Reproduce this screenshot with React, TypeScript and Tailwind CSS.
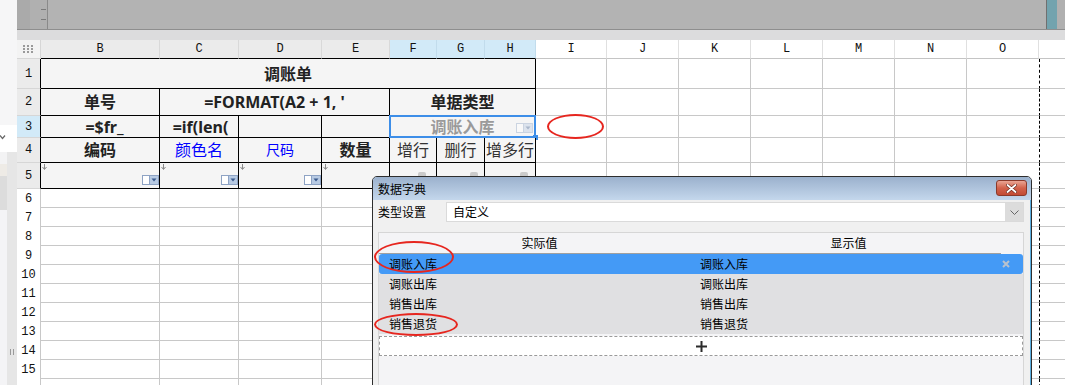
import type { ReactNode } from 'react'

const LETTERS = ['B', 'C', 'D', 'E', 'F', 'G', 'H', 'I', 'J', 'K', 'L', 'M', 'N', 'O']
const TAIL = ['I', 'J', 'K', 'L', 'M', 'N', 'O', 'END']
const BODY_ROWS = [6, 7, 8, 9, 10, 11, 12, 13, 14, 15, 16]

function Dots() {
  return (
    <svg width="11" height="8" viewBox="0 0 11 8">
      {[0, 4, 8].map(x => [0, 3, 6].map(y => <rect key={`${x}-${y}`} x={x} y={y} width="2" height="2" fill="#9a9a9a" />))}
    </svg>
  )
}

function Arrow() {
  return (
    <svg width="5" height="6" viewBox="0 0 5 6">
      <path d="M2.5 0v5M0.5 3l2 2.5 2-2.5" stroke="#8a8a8a" fill="none" strokeWidth="1" />
    </svg>
  )
}

function DropIcon({ faded }: { faded?: boolean }) {
  return (
    <svg width="17" height="10" viewBox="0 0 17 10" className={faded ? 'opacity-40' : ''}>
      <rect x="0.5" y="0.5" width="7" height="9" fill="#fff" stroke="#8ea3c4" />
      <rect x="7.5" y="0.5" width="9" height="9" fill="#b7cae3" stroke="#8ea3c4" />
      <path d="M9.5 3.5h5l-2.5 3z" fill="#3b5b8e" />
    </svg>
  )
}

// report cell; text colour is passed in className so nothing fights over it
function Rep({ span, children, className = '' }: { span?: number; children?: ReactNode; className?: string }) {
  const sp = span === 7 ? 'col-span-7' : span === 3 ? 'col-span-3' : ''
  return (
    <div className={`relative flex items-center justify-center overflow-hidden whitespace-nowrap border-r border-b border-black bg-[#f5f5f5] leading-none ${sp} ${className}`}>
      {children}
    </div>
  )
}

function FieldCell({ drop, knob }: { drop?: boolean; knob?: string }) {
  if (knob) {
    return (
      <div className={`flex items-center justify-end border-r border-b border-black bg-[#f5f5f5] ${knob}`}>
        <span className="h-[8px] w-[8px] rounded-[2px] bg-[#cacaca]" />
      </div>
    )
  }
  return (
    <div className="flex flex-col justify-between border-r border-b border-black bg-[#f5f5f5] pb-[3px] pl-px pt-px">
      <Arrow />
      {drop ? (
        <div className="flex justify-end">
          <DropIcon />
        </div>
      ) : (
        <span />
      )}
    </div>
  )
}

function Tail() {
  return (
    <>
      {TAIL.map(c =>
        c === 'END' ? (
          <div key={c} className="border-b border-l border-[#c8c8c8] border-l-black bg-white [border-left-style:dashed]" />
        ) : c === 'O' ? (
          <div key={c} className="border-b border-[#c8c8c8] bg-white" />
        ) : (
          <div key={c} className="border-r border-b border-[#c8c8c8] bg-white" />
        )
      )}
    </>
  )
}

function RowHead({ n }: { n: number }) {
  return (
    <div className={`flex items-center justify-center border-r border-b border-b-[#d6d6d6] border-r-black font-['Liberation_Mono',monospace] text-[12px] text-[#111] ${n === 3 ? 'bg-[#d2eaf8]' : 'bg-[#ebebeb]'}`}>
      {n}
    </div>
  )
}

function Sheet() {
  return (
    <div className="grid grid-cols-[24px_119px_79px_83px_68px_47px_48px_51px_71px_72px_72px_72px_72px_72px_72px_26px] grid-rows-[19px_30px_27px_22px_25px_26px_repeat(11,19px)] font-['Noto_Sans','Noto_Sans_CJK_SC',sans-serif]">
      {/* column header */}
      <div className="flex items-center justify-center border-r border-b border-[#d6d6d6] bg-[#f3f3f3]">
        <Dots />
      </div>
      {LETTERS.map((l, i) => (
        <div
          key={l}
          className={`flex items-center justify-center border-r border-b font-['Liberation_Mono',monospace] text-[12px] text-[#111] ${
            i < 4
              ? 'border-[#d9d9d9] border-b-black bg-[#ebebeb]'
              : i < 7
                ? 'border-[#c2dcec] border-b-black bg-[#d2eaf8]'
                : 'border-[#e0e0e0] border-b-[#c4c4c4] bg-white'
          }`}
        >
          {l}
        </div>
      ))}
      <div className="border-b border-[#c4c4c4] bg-white" />

      {/* row 1 */}
      <RowHead n={1} />
      <Rep span={7} className="text-[16px] font-bold text-[#222]">调账单</Rep>
      <Tail />

      {/* row 2 */}
      <RowHead n={2} />
      <Rep className="text-[16px] font-bold text-[#222]">单号</Rep>
      <Rep span={3} className="text-[16px] font-bold text-[#222]">=FORMAT(A2 + 1, '</Rep>
      <Rep span={3} className="text-[16px] font-bold text-[#222]">单据类型</Rep>
      <Tail />

      {/* row 3 */}
      <RowHead n={3} />
      <Rep className="pl-[9px] text-[16px] font-bold text-[#222]">=$fr_</Rep>
      <Rep className="pl-[3px] text-[16px] font-bold text-[#222]">=if(len(</Rep>
      <Rep />
      <Rep />
      <Rep span={3} className="overflow-visible! bg-[#e9f1fb] text-[16px] font-bold text-[#9a9a9a]">
        <span>调账入库</span>
        <span className="absolute right-[2px] top-[7px]">
          <DropIcon faded />
        </span>
        <span className="absolute -inset-px border-2 border-[#3d8ee8]" />
        <span className="absolute -bottom-[3px] -right-[3px] h-[5px] w-[5px] bg-[#3d8ee8]" />
      </Rep>
      <Tail />

      {/* row 4 */}
      <RowHead n={4} />
      <Rep className="text-[16px] font-bold text-[#222]">编码</Rep>
      <Rep className="text-[16px] text-[#0000ff]">颜色名</Rep>
      <Rep className="text-[14px] text-[#0000ff]">尺码</Rep>
      <Rep className="text-[16px] font-bold text-[#222]">数量</Rep>
      <Rep className="text-[16px] text-[#333]">增行</Rep>
      <Rep className="text-[16px] text-[#333]">删行</Rep>
      <Rep className="text-[16px] text-[#333]">增多行</Rep>
      <Tail />

      {/* row 5 */}
      <RowHead n={5} />
      <FieldCell drop />
      <FieldCell drop />
      <FieldCell drop />
      <FieldCell />
      <FieldCell knob="pr-[10px]" />
      <FieldCell knob="pr-[6px]" />
      <FieldCell knob="pr-[7px]" />
      <Tail />

      {BODY_ROWS.map(n => (
        <div key={n} className="contents">
          <div className="flex items-center justify-center border-r border-[#c8c8c8] bg-white font-['Liberation_Mono',monospace] text-[12px] text-[#111]">
            {n < 16 ? n : ''}
          </div>
          {LETTERS.slice(0, 7).map(l => (
            <div key={l} className="border-r border-b border-[#c8c8c8] bg-white" />
          ))}
          <Tail />
        </div>
      ))}
    </div>
  )
}

function TopBar() {
  return (
    <div className="flex h-[30px] shrink-0 border-b border-[#8e8e8e]">
      <div className="w-[13px] bg-[#aaaaaa]" />
      <div className="flex w-[18px] flex-col items-end gap-[9px] border-r border-[#8a8a8a] bg-[#b0b0b0] pr-px pt-[9px]">
        <span className="h-px w-[5px] bg-[#7a7a7a]" />
        <span className="h-px w-[5px] bg-[#7a7a7a]" />
      </div>
      <div className="flex-1 bg-[#b3b3b3]" />
      <div className="w-[11px] border-l border-[#707070] bg-[#72a3ae]" />
      <div className="w-[8px] bg-[#b0b0b0]" />
    </div>
  )
}

function LeftPanel() {
  return (
    <div className="flex w-[17px] shrink-0 flex-col bg-[#f6f6f7]">
      <div className="h-[125px] shrink-0" />
      <div className="flex h-[27px] shrink-0 items-center bg-white pb-[2px]">
        <svg width="6" height="5" viewBox="0 0 6 5">
          <path d="M0 0.5l2.5 3 2.5-3" stroke="#666" fill="none" strokeWidth="1.2" />
        </svg>
      </div>
      <div className="flex flex-1">
        <div className="flex w-[7px] flex-col">
          <div className="h-[12px] bg-[#f3f3f4]" />
          <div className="h-[12px] bg-[#eeebe6]" />
          <div className="h-[34px] bg-[#dcdcdc]" />
          <div className="flex-1 bg-[#f4f4f6]" />
        </div>
        <div className="flex w-[10px] flex-col items-center bg-[#e6e6e6] pt-[197px]">
          <div className="flex gap-[2px]">
            <span className="h-[6px] w-px bg-[#9a9a9a]" />
            <span className="h-[6px] w-px bg-[#9a9a9a]" />
          </div>
        </div>
      </div>
    </div>
  )
}

function Dialog() {
  const rows = ['调账入库', '调账出库', '销售出库', '销售退货']
  return (
    <div className="absolute left-[372px] top-[176px] flex h-[230px] w-[660px] flex-col overflow-hidden rounded-t-[5px] border border-[#2e2e2e] bg-[#f0f0f0] font-['Noto_Sans_CJK_SC',sans-serif] text-[12px] leading-none text-black">
      <div className="flex h-[23px] shrink-0 items-start justify-between bg-gradient-to-b from-[#9bb1cd] to-[#c4d7ec] pl-[5px] pr-[4px]">
        <span className="pt-[6px] text-[12px]">数据字典</span>
        <div className="mt-[3px] flex h-[16px] w-[31px] items-center justify-center rounded-[3px] border border-[#8b3a2a] bg-gradient-to-b from-[#e9a594] via-[#d2624b] to-[#c24b34]">
          <svg width="11" height="9" viewBox="0 0 11 9">
            <path d="M1.5 1l8 7M9.5 1l-8 7" stroke="#6b2a1e" strokeWidth="3.2" strokeLinecap="round" />
            <path d="M1.5 1l8 7M9.5 1l-8 7" stroke="#fff" strokeWidth="1.8" strokeLinecap="round" />
          </svg>
        </div>
      </div>
      <div className="flex flex-1 flex-col border-r border-[#5aaee0] pl-[5px] pr-[6px]">
        <div className="mt-[2px] flex h-[20px] items-center">
          <span className="w-[68px]">类型设置</span>
          <div className="flex h-full flex-1 items-stretch border border-[#dadada] bg-white">
            <span className="flex flex-1 items-center pl-[6px]">自定义</span>
            <span className="flex w-[18px] items-center justify-center bg-[#dcdcdc]">
              <svg width="9" height="5" viewBox="0 0 9 5">
                <path d="M0.5 0.5l4 4 4-4" stroke="#666" fill="none" />
              </svg>
            </span>
          </div>
        </div>
        <div className="mt-[10px] flex flex-1 flex-col border border-[#d6d6d6] bg-[#f4f4f6]">
          <div className="grid h-[20px] grid-cols-[321px_297px] items-center">
            <span className="text-center">实际值</span>
            <span className="text-center">显示值</span>
          </div>
          <div className="mr-[22px] h-px bg-[#a0a0a0]" />
          {rows.map((r, i) => (
            <div
              key={r}
              className={`grid h-[20px] grid-cols-[320px_1fr_20px] items-center px-px ${i === 0 ? 'rounded-[3px] bg-[#449af6]' : 'bg-[#e0e0e2]'}`}
            >
              <span className="pl-[9px]">{r}</span>
              <span>{r}</span>
              {i === 0 ? (
                <svg width="8" height="8" viewBox="0 0 8 8">
                  <path d="M1 1l6 6M7 1l-6 6" stroke="#b9c2ce" strokeWidth="2" />
                </svg>
              ) : (
                <span />
              )}
            </div>
          ))}
          <div className="mt-[2px] flex h-[20px] items-center justify-center border border-dashed border-[#9a9a9a] bg-white">
            <svg width="11" height="11" viewBox="0 0 11 11">
              <path d="M5.5 0v11M0 5.5h11" stroke="#2b2b2b" strokeWidth="2" />
            </svg>
          </div>
        </div>
      </div>
    </div>
  )
}

export default function App() {
  return (
    <div className="relative flex h-[385px] w-[1065px] overflow-hidden bg-white">
      <LeftPanel />
      <div className="flex min-w-0 flex-1 flex-col">
        <TopBar />
        <div className="h-[10px] shrink-0 bg-[#dcdcdd]" />
        <Sheet />
      </div>
      <Dialog />
      {/* red annotation marks */}
      <div className="absolute left-[547px] top-[114px] h-[25px] w-[57px] rounded-[50%] border-[2.5px] border-[#e6261f]" />
      <div className="absolute left-[374px] top-[241px] h-[32px] w-[80px] rounded-[50%] border-[2.5px] border-[#e6261f]" />
      <div className="absolute left-[374px] top-[313px] h-[23px] w-[84px] rounded-[50%] border-[2.5px] border-[#e6261f]" />
    </div>
  )
}
